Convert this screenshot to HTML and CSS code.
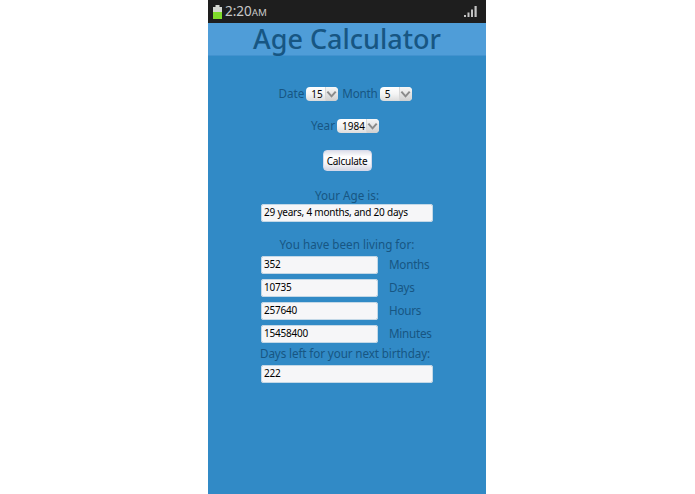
FILE: index.html
```html
<!DOCTYPE html>
<html lang="en">
<head>
  <meta charset="UTF-8">
  <meta name="viewport" content="width=device-width, initial-scale=1">
  <title>Age Calculator</title>
  <link rel="stylesheet" href="styles.css">
</head>
<body>
  <div class="phone">

    <!-- status bar -->
    <div class="status">
      <svg class="battery" width="9" height="14" viewBox="0 0 9 14">
        <path d="M2.5 0h4v2H9v12H0V2h2.5z" fill="#d5d8d2"/>
        <path d="M0 7h9v7H0z" fill="#7fdc2b"/>
      </svg>
      <span class="clock">2:20<small>AM</small></span>
      <svg class="signal" width="13" height="11" viewBox="0 0 13 11" fill="#c4c4c4">
        <rect x="0" y="9" width="2" height="2"/>
        <rect x="3.5" y="6.5" width="2" height="4.5"/>
        <rect x="7" y="3.5" width="2" height="7.5"/>
        <rect x="10.5" y="0" width="2.2" height="11"/>
      </svg>
    </div>

    <h1>Age Calculator</h1>

    <form class="calc">
      <div class="row">
        <label for="date">Date</label>
        <span class="drop"><select id="date"><option>15</option></select><svg width="13" height="14" viewBox="0 0 13 14"><path d="M1.5 4.5l4.5 5 4.5-5"/></svg></span>
        <label for="month" class="month">Month</label>
        <span class="drop"><select id="month"><option>5</option></select><svg width="13" height="14" viewBox="0 0 13 14"><path d="M1.5 4.5l4.5 5 4.5-5"/></svg></span>
      </div>
      <div class="row year">
        <label for="year">Year</label>
        <span class="drop wide"><select id="year"><option>1984</option></select><svg width="13" height="14" viewBox="0 0 13 14"><path d="M1.5 4.5l4.5 5 4.5-5"/></svg></span>
      </div>

      <button type="button">Calculate</button>

      <label class="caption age" for="age">Your Age is:</label>
      <input type="text" id="age" value="29 years, 4 months, and 20 days">

      <div class="caption living">You have been living for:</div>
      <div class="units">
        <input type="text" id="months" value="352"><label for="months">Months</label>
        <input type="text" id="days" value="10735"><label for="days">Days</label>
        <input type="text" id="hours" value="257640"><label for="hours">Hours</label>
        <input type="text" id="minutes" value="15458400"><label for="minutes">Minutes</label>
      </div>

      <label class="caption next" for="left">Days left for your next birthday:</label>
      <input type="text" id="left" value="222">
    </form>
  </div>
</body>
</html>
```

FILE: styles.css
```css
* {
  box-sizing: border-box;
}

body {
  margin: 0;
  background: white;
  font-family: "Noto Sans", "Open Sans", sans-serif;
  font-size: 11.7px;
  color: #175683;
}

.phone {
  width: 278px;
  height: 494px;
  margin-left: 208px;
  background: #318ac6;
  overflow: hidden;
}

.status {
  display: flex;
  align-items: center;
  height: 23px;
  padding: 0 9px 0 5px;
  background: #1e1e1e;
  color: #c8c8c8;
}

.clock {
  margin-left: 3px;
  font-size: 13.5px;
  line-height: 23px;
}

.clock small {
  font-size: 9.8px;
}

.signal {
  margin-left: auto;
}

h1 {
  height: 33px;
  margin: 0;
  background: #4f9dd8;
  border-bottom: 1px solid #4292cf;
  font-size: 27px;
  font-weight: 500;
  line-height: 31px;
  text-align: center;
}

.calc {
  display: flex;
  flex-direction: column;
  width: 172px;
  margin: 30px 0 0 53px;
}

.row {
  display: flex;
  align-items: center;
  justify-content: center;
  align-self: center;
  height: 16px;
  margin-right: 4px;
  white-space: nowrap;
}

.row label {
  line-height: 14px;
  margin-top: -2px;
}

.year {
  margin-top: 16px;
}

.drop {
  display: flex;
  width: 32px;
  height: 14px;
  margin-left: 2px;
  border-radius: 4px;
  background: linear-gradient(#ffffff, #f4f4f4 50%, #dcdcdc);
  overflow: hidden;
}

.drop.wide {
  width: 42px;
}

.row .month {
  margin-left: 4px;
  letter-spacing: -0.2px;
}

select {
  flex: 1;
  min-width: 0;
  padding: 0 0 0 5px;
  border: none;
  background: none;
  appearance: none;
  font: 10px/14px "Noto Sans", "Open Sans", sans-serif;
  color: #000;
}

.drop svg {
  flex: none;
  background: linear-gradient(#f6f6f6, #e4e4e4 50%, #cfcfcf);
  border-left: 1px solid #d8d8d8;
  fill: none;
  stroke: #8b8b8b;
  stroke-width: 2.2;
}

button {
  align-self: center;
  width: 49px;
  height: 21px;
  margin-top: 16px;
  padding: 0;
  border: 1px solid #d5d9ea;
  border-radius: 4px;
  background: linear-gradient(#dfe0ea, #ffffff 30%, #f6f6fa 65%, #d7d8e4);
  font: 10px/18px "Noto Sans", "Open Sans", sans-serif;
  letter-spacing: -0.25px;
  color: #000;
}

.caption {
  height: 16px;
  line-height: 16px;
  text-align: center;
  white-space: nowrap;
}

.age {
  margin-top: 16px;
  margin-bottom: 1px;
}

.living {
  margin-top: 14px;
}

input {
  width: 172px;
  height: 18px;
  padding: 0 2px 3px;
  border: 1px solid #a9b4bc;
  outline: 1px solid #c3d8e7;
  outline-offset: -1px;
  border-radius: 2px;
  background: #f6f6f8;
  font: 10px/13px "Noto Sans", "Open Sans", sans-serif;
  letter-spacing: -0.22px;
  color: #000;
}

.units {
  display: grid;
  grid-template-columns: 117px auto;
  column-gap: 11px;
  grid-auto-rows: 18px;
  row-gap: 5px;
  align-items: center;
  margin-top: 4px;
}

.units input {
  width: 117px;
}

.units label {
  margin-top: -2px;
  letter-spacing: -0.25px;
}

.next {
  margin: 2px 0 4px -1px;
  text-align: left;
  letter-spacing: -0.12px;
}
```
